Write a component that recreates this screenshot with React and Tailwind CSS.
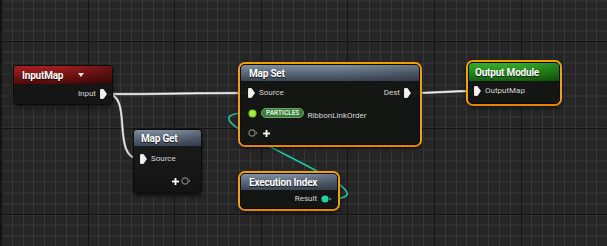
import React from 'react';

// header gradients per node type
const blueHead =
  'bg-[linear-gradient(90deg,transparent_55%,rgba(0,0,0,0.18)),linear-gradient(180deg,#8190a1_0%,#5d6b7c_45%,#3b4655_100%)]';
const redHead =
  'bg-[linear-gradient(90deg,transparent_45%,rgba(0,0,0,0.35)),linear-gradient(180deg,#a51f1f_0%,#7e1515_50%,#4d0b0b_100%)]';
const greenHead =
  'bg-[linear-gradient(90deg,transparent_55%,rgba(0,0,0,0.2)),linear-gradient(180deg,#38ab2b_0%,#248c19_50%,#155e0f_100%)]';

const gridBg =
  'bg-[repeating-linear-gradient(90deg,#141414_0_1px,transparent_1px_86.6px),repeating-linear-gradient(180deg,#141414_0_1px,transparent_1px_86.6px),repeating-linear-gradient(90deg,#383838_0_1px,transparent_1px_10.825px),repeating-linear-gradient(180deg,#383838_0_1px,transparent_1px_10.825px)] bg-[position:1px_0,0_41px,1px_0,0_8.5px]';

function MapPin() {
  return (
    <svg width="7" height="10" viewBox="0 0 7 10" className="shrink-0">
      <path d="M0.6 0.6 H3.4 L6.4 5 L3.4 9.4 H0.6 Z" fill="#f2f2f2" stroke="#f2f2f2" strokeWidth="1" strokeLinejoin="round" />
    </svg>
  );
}

function EmptyPin() {
  return (
    <svg width="10" height="8" viewBox="0 0 10 8" className="shrink-0">
      <circle cx="4" cy="4" r="3.1" fill="none" stroke="#7e7e7e" strokeWidth="1.2" />
      <path d="M8 2.6 L9.6 4 L8 5.4 Z" fill="#7e7e7e" />
    </svg>
  );
}

function Plus() {
  return (
    <svg width="7" height="7" viewBox="0 0 7 7" className="shrink-0">
      <rect x="2.6" y="0" width="1.8" height="7" fill="#fff" />
      <rect x="0" y="2.6" width="7" height="1.8" fill="#fff" />
    </svg>
  );
}

function Title({ children }) {
  return (
    <span className="text-[10px] font-bold tracking-[-0.2px] text-white [text-shadow:0_1px_1px_rgba(0,0,0,0.8)]">
      {children}
    </span>
  );
}

function Label({ children }) {
  return <span className="text-[8px] leading-none text-[#d6d6d6]">{children}</span>;
}

export default function App() {
  return (
    <div className={`relative h-[246px] w-[607px] overflow-hidden bg-[#262626] font-[family-name:Roboto,'DejaVu_Sans',sans-serif] ${gridBg}`}>
      {/* wires */}
      <svg className="absolute inset-0" width="607" height="246">
        <path d="M328 199 C418 199, 158 113, 248 113" fill="none" stroke="#1ec9a2" strokeWidth="1.6" />
        <path d="M107 94 C170 94, 190 93, 247 93" fill="none" stroke="#9a9a9a" strokeWidth="2.6" />
        <path d="M107 94 C170 94, 190 93, 247 93" fill="none" stroke="#ececec" strokeWidth="1.4" />
        <path d="M107 94 C134 94, 110 159, 140 159" fill="none" stroke="#9a9a9a" strokeWidth="2.4" />
        <path d="M107 94 C134 94, 110 159, 140 159" fill="none" stroke="#ececec" strokeWidth="1.3" />
        <path d="M411 93 C440 93, 446 91, 474 91" fill="none" stroke="#9a9a9a" strokeWidth="2.6" />
        <path d="M411 93 C440 93, 446 91, 474 91" fill="none" stroke="#ececec" strokeWidth="1.4" />
      </svg>

      {/* InputMap */}
      <div className="absolute left-[13px] top-[65px] flex h-[40px] w-[100px] flex-col overflow-hidden rounded-[4px] border border-[#0b0b0b] bg-[rgba(20,21,20,0.97)] shadow-[0_2px_4px_rgba(0,0,0,0.6)]">
        <div className={`flex h-[18px] items-center pl-[8px] ${redHead}`}>
          <Title>InputMap</Title>
          <svg width="6" height="4" viewBox="0 0 6 4" className="ml-[15px]">
            <path d="M0 0 H6 L3 4 Z" fill="#e8e8e8" />
          </svg>
        </div>
        <div className="mt-[1px] flex h-[18px] items-center justify-end gap-[4px] pr-[5px]">
          <Label>Input</Label>
          <MapPin />
        </div>
      </div>

      {/* Map Get */}
      <div className="absolute left-[133px] top-[129px] flex h-[65px] w-[69px] flex-col overflow-hidden rounded-[4px] border border-[#0b0b0b] bg-[linear-gradient(180deg,#1b1c1b,#121312)] shadow-[0_2px_4px_rgba(0,0,0,0.6)]">
        <div className={`flex h-[16px] items-center pl-[7px] ${blueHead}`}>
          <Title>Map Get</Title>
        </div>
        <div className="mt-[2px] flex h-[22px] items-center gap-[4px] pl-[6px]">
          <MapPin />
          <Label>Source</Label>
        </div>
        <div className="flex h-[22px] items-center justify-end gap-[2px] pr-[10px]">
          <Plus />
          <EmptyPin />
        </div>
      </div>

      {/* Map Set */}
      <div className="absolute left-[238px] top-[62px] h-[85px] w-[184px] rounded-[7px] border-2 border-[#f2a200] border-b-[#e48400] shadow-[0_2px_4px_rgba(0,0,0,0.6)]">
        <div className="flex h-full flex-col overflow-hidden rounded-[5px] border border-[#0a0a0a] bg-[rgba(20,22,20,0.97)]">
          <div className={`flex h-[16px] items-center pl-[8px] ${blueHead}`}>
            <Title>Map Set</Title>
          </div>
          <div className="mt-[2px] flex h-[20px] items-center justify-between pl-[7px] pr-[8px]">
            <div className="flex items-center gap-[4px]">
              <MapPin />
              <Label>Source</Label>
            </div>
            <div className="flex items-center gap-[4px]">
              <Label>Dest</Label>
              <MapPin />
            </div>
          </div>
          <div className="flex h-[20px] items-center pl-[7px]">
            <svg width="9" height="9" viewBox="0 0 9 9" className="shrink-0">
              <circle cx="4.5" cy="4.5" r="4" fill="#7fc81f" />
              <circle cx="4.5" cy="4.5" r="3" fill="#a2ec35" />
            </svg>
            <span className="ml-[4px] flex h-[10px] items-center rounded-full border border-[#6aa86a] bg-[#3e7a3e] px-[4px] text-[6.5px] font-bold leading-none text-[#dcefdc]">
              PARTICLES
            </span>
            <span className="ml-[3px]">
              <Label>RibbonLinkOrder</Label>
            </span>
          </div>
          <div className="flex h-[20px] items-center gap-[5px] pl-[7px]">
            <EmptyPin />
            <Plus />
          </div>
        </div>
      </div>

      {/* Output Module */}
      <div className="absolute left-[466px] top-[60px] h-[46px] w-[96px] rounded-[7px] border-2 border-[#f2a200] border-b-[#e48400] shadow-[0_2px_4px_rgba(0,0,0,0.6)]">
        <div className="flex h-full flex-col overflow-hidden rounded-[5px] border border-[#0a0a0a] bg-[rgba(20,22,20,0.97)]">
          <div className={`flex h-[18px] items-center pl-[6px] ${greenHead}`}>
            <Title>Output Module</Title>
          </div>
          <div className="mt-[1px] flex h-[18px] items-center gap-[4px] pl-[5px]">
            <MapPin />
            <Label>OutputMap</Label>
          </div>
        </div>
      </div>

      {/* Execution Index */}
      <div className="absolute left-[238px] top-[171px] h-[40px] w-[102px] rounded-[7px] border-2 border-[#f2a200] border-b-[#e48400] shadow-[0_2px_4px_rgba(0,0,0,0.6)]">
        <div className="flex h-full flex-col overflow-hidden rounded-[5px] border border-[#0a0a0a] bg-[rgba(20,22,20,0.97)]">
          <div className={`flex h-[16px] items-center pl-[8px] ${blueHead}`}>
            <Title>Execution Index</Title>
          </div>
          <div className="flex h-[17px] items-center justify-end gap-[4px] pr-[5px]">
            <Label>Result</Label>
            <svg width="11" height="8" viewBox="0 0 11 8" className="shrink-0">
              <circle cx="4" cy="4" r="3.6" fill="#1fd3a6" />
              <path d="M8.6 2.6 L10.4 4 L8.6 5.4 Z" fill="#1fd3a6" />
            </svg>
          </div>
        </div>
      </div>
    </div>
  );
}
